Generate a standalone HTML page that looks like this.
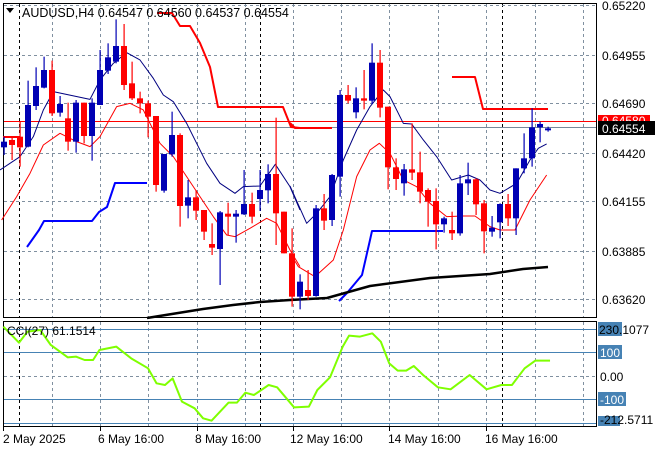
<!DOCTYPE html>
<html><head><meta charset="utf-8"><style>
html,body{margin:0;padding:0;background:#fff;}
svg{display:block;font-family:"Liberation Sans",sans-serif;}
</style></head><body>
<svg id="s" width="660" height="450" viewBox="0 0 660 450" xmlns="http://www.w3.org/2000/svg">
<rect width="660" height="450" fill="#fff"/>
<g id="grid"></g>
<rect x="3.5" y="3.5" width="593" height="314" fill="none" stroke="#000"/>
<rect x="3.5" y="321.5" width="593" height="105" fill="none" stroke="#000"/>
<line x1="4" y1="121.5" x2="596" y2="121.5" stroke="#f00"/>
<line x1="4" y1="127.5" x2="596" y2="127.5" stroke="#778899"/>
<g fill="none" stroke-linejoin="round">
<polyline stroke="#f00" stroke-width="2" points="3,137 19,137 20,142"/>
<polyline stroke="#f00" stroke-width="2" points="157,13 172,13 180,26 190,26 200,43 210,67 218,107 283,107 291,127 300,128"/>
<polyline stroke="#f00" stroke-width="2" points="290,123 295,128 332,128"/>
<polyline stroke="#f00" stroke-width="2" points="452,77 475,77 483,109 548,109"/>
<polyline stroke="#00f" stroke-width="2" points="27,247 39,230 44,221 92,221 99,212 107,207 115,183 147,183"/>
<polyline stroke="#00f" stroke-width="2" points="339,301 347,293 362,275 370,240 372,231 443,231"/>
<polyline stroke="#000" stroke-width="2.5" points="147,318 203,309 233,305 260,302 290,300 327,298 370,286 430,278 490,274 523,269 548,267"/>
<g transform="translate(0,10) scale(0.3333)">
<polyline vector-effect="non-scaling-stroke" stroke="#000080" points="0,480 60,440 100,380 130,300 160,245 270,268 300,210 340,160 380,128 420,150 460,205 490,255 520,275 560,340 590,400 620,460 660,520 705,550 730,530 780,528 826,463 870,530 900,600"/>
<polyline vector-effect="non-scaling-stroke" stroke="#f00" points="5,630 50,560 90,490 130,405 180,370 230,395 270,410 300,380 350,290 390,280 430,300 480,400 520,440 560,500 600,560 640,620 680,675 705,680 750,655 800,625 830,640 870,720 900,770"/>
</g>
<g transform="translate(290,10) scale(0.3333)">
<polyline vector-effect="non-scaling-stroke" stroke="#000080" points="0,528 50,640 80,610 120,560 160,450 200,360 240,290 280,240 300,260 340,340 365,342 400,390 440,440 485,510 535,495 570,510 600,540 630,550 680,520 720,450 745,415 770,402"/>
<polyline vector-effect="non-scaling-stroke" stroke="#f00" points="0,730 25,770 75,800 130,750 160,660 200,500 240,420 268,400 300,430 340,510 380,530 420,580 470,620 520,618 555,618 600,650 630,660 675,660 720,570 770,495"/>
</g>
<g transform="translate(0,300) scale(0.4231,0.3333)">
<polyline vector-effect="non-scaling-stroke" stroke="#7fff00" stroke-width="2" points="8,80 45,128 65,95 95,90 120,135 160,172 180,170 200,180 220,180 235,150 275,140 310,175 350,205 370,250 390,255 408,235 430,305 460,325 480,355 500,362 540,308 560,308 580,278 600,285 635,255 655,262 695,322 730,320 750,270 780,232 810,140 825,107 850,110 880,100 900,125 920,190 940,212 960,212 978,198 1000,225 1035,262 1065,268 1110,225 1150,268 1185,255 1210,255 1240,205 1265,182 1300,182"/>
</g>
</g>
<g id="candles"></g>
<polygon points="6,8 14,8 10,13" fill="#000"/>
<text x="22" y="17" font-size="12.5">AUDUSD,H4  0.64547 0.64560 0.64537 0.64554</text>
<text x="7" y="335" font-size="12">CCI(27) 61.1514</text>
<g font-size="12" fill="#000">
<text x="602" y="10">0.65220</text>
<text x="602" y="60">0.64955</text>
<text x="602" y="108">0.64690</text>
<text x="602" y="158">0.64420</text>
<text x="602" y="206">0.64155</text>
<text x="602" y="256">0.63885</text>
<text x="602" y="304">0.63620</text>
</g>
<rect x="598" y="115" width="52" height="10" fill="#f00"/>
<text x="602" y="125" font-size="12" fill="#fff">0.64580</text>
<rect x="598" y="121" width="57" height="14" fill="#000"/>
<text x="602" y="133" font-size="12" fill="#fff">0.64554</text>
<rect x="598" y="322" width="24" height="14" fill="#4682b4"/>
<text x="599" y="334" font-size="12">230.1077</text>
<rect x="598" y="345" width="24" height="14" fill="#4682b4"/>
<text x="600" y="357" font-size="12" fill="#fff">100</text>
<text x="600" y="381" font-size="12">0.00</text>
<rect x="598" y="392" width="28" height="14" fill="#4682b4"/>
<text x="600" y="404" font-size="12" fill="#fff">-100</text>
<rect x="598" y="416" width="22" height="10" fill="#4682b4"/>
<text x="600" y="424" font-size="12">-212.5711</text>
<g font-size="12">
<text x="3" y="443">2 May 2025</text>
<text x="98" y="443">6 May 16:00</text>
<text x="195" y="443">8 May 16:00</text>
<text x="290" y="443">12 May 16:00</text>
<text x="388" y="443">14 May 16:00</text>
<text x="485" y="443">16 May 16:00</text>
</g>
<g stroke="#000">
<line x1="3.5" y1="427" x2="3.5" y2="431"/><line x1="100.5" y1="427" x2="100.5" y2="431"/><line x1="197.5" y1="427" x2="197.5" y2="431"/><line x1="293.5" y1="427" x2="293.5" y2="431"/><line x1="389.5" y1="427" x2="389.5" y2="431"/><line x1="486.5" y1="427" x2="486.5" y2="431"/>
</g>
</svg>
<script>
var NS="http://www.w3.org/2000/svg";
function el(p,t,a){var e=document.createElementNS(NS,t);for(var k in a)e.setAttribute(k,a[k]);p.appendChild(e);return e;}
var g=document.getElementById("grid");
var gx=[52,100,148,197,245,293,341,389,438,486,535,583];
gx.forEach(function(x){el(g,"line",{x1:x+.5,y1:4,x2:x+.5,y2:317,stroke:"#8090a0","stroke-dasharray":"3,3"});el(g,"line",{x1:x+.5,y1:322,x2:x+.5,y2:426,stroke:"#8090a0","stroke-dasharray":"3,3"});});
[19,260,502].forEach(function(x){el(g,"line",{x1:x+.5,y1:4,x2:x+.5,y2:317,stroke:"#000","stroke-dasharray":"3,3"});el(g,"line",{x1:x+.5,y1:322,x2:x+.5,y2:426,stroke:"#000","stroke-dasharray":"3,3"});});
[5,55,103,153,201,251,299].forEach(function(y){el(g,"line",{x1:4,y1:y+.5,x2:596,y2:y+.5,stroke:"#8090a0","stroke-dasharray":"3,3"});});
[329,352,399,423].forEach(function(y){el(g,"line",{x1:4,y1:y+.5,x2:596,y2:y+.5,stroke:"#4682b4"});});
el(g,"line",{x1:4,y1:376.5,x2:596,y2:376.5,stroke:"#8090a0","stroke-dasharray":"3,3"});
var C=[
["b",395,412,380,435],["r",390,405,380,450],["r",380,412,335,470],["b",285,410,212,412],["b",228,288,172,300],["b",180,233,140,235],["r",180,310,152,318],["b",282,308,258,320],["r",325,395,278,422],["b",278,395,270,428],["r",278,378,278,400],["b",278,378,265,452],["b",180,285,120,285],["b",142,182,100,192],["b",108,155,28,160],["r",108,225,42,240],["r",220,265,155,270],["r",265,280,245,310],["r",280,320,272,382],["r",318,525,318,545],["b",432,542,432,548],["b",375,433,305,440],["r",375,588,370,650],["b",562,587,510,625],["r",562,602,540,630],["r",600,665,600,690],["r",702,713,640,735],["b",607,717,603,825],["r",611,620,578,675],["b",611,620,600,698],["b",582,613,480,615],["r",582,620,548,640],["b",540,567,480,603],["b",492,541,463,580],["r",492,610,323,705],["r",605,730,605,730],
["r",730,860,655,890],["b",815,860,793,898],["r",840,858,780,870],["b",595,858,585,860],["r",595,632,552,660],["b",495,630,492,648],["b",255,500,240,560],["r",255,272,225,280],["b",265,307,232,325],["r",265,272,180,298],["b",158,272,100,282],["r",158,293,120,322],["r",290,472,290,538],["r",472,507,445,540],["b",478,520,462,557],["r",478,488,340,510],["r",487,545,425,580],["r",540,575,535,650],["r",573,643,535,718],["b",625,643,620,668],["r",660,670,605,690],["b",520,670,495,677],["b",508,520,458,555],["r",508,583,505,615],["r",580,664,570,730],["b",653,665,618,680],["b",582,637,580,685],["r",582,625,552,648],["b",475,625,475,675],["b",445,475,370,490],["b",352,445,295,470],["b",342,352,335,397],["b",355,357,350,365]];
var cg=document.getElementById("candles");
C.forEach(function(c,i){var x=4+8*i;var col=c[0]=="b"?"#0000b4":"#ff0000";
var y=function(v){return v/3+10;};
el(cg,"rect",{x:x-0.5,y:y(c[3]),width:1.2,height:Math.max(1,y(c[4])-y(c[3])),fill:col});
var h=Math.max(2,y(c[2])-y(c[1]));
el(cg,"rect",{x:x-3,y:y(c[1]),width:6,height:h,fill:col});});
</script>
</body></html>
